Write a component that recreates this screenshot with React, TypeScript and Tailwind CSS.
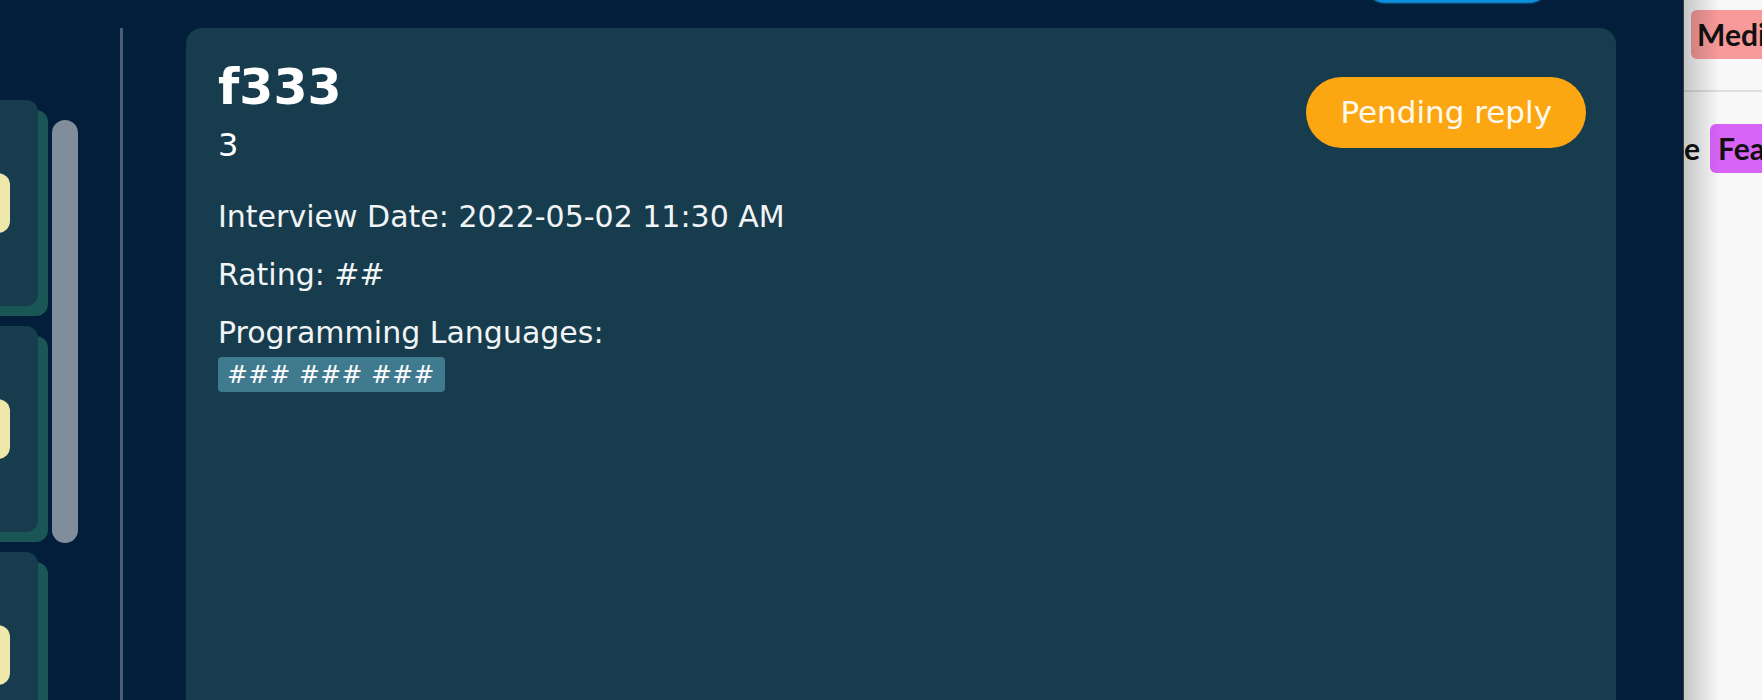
import React from "react";

function LeftCard() {
  return (
    <div className="w-[200px] h-[206px] shrink-0 rounded-[12px] bg-[#163c4e] shadow-[10px_10px_0_0_#1b5656] flex items-center justify-end pr-[28px]">
      <div className="w-[80px] h-[60px] rounded-[12px] bg-[#eee8aa]" />
    </div>
  );
}

export default function App() {
  return (
    <div className="flex w-[1762px] h-[700px] overflow-hidden bg-[#021e3b] font-['DejaVu_Sans',sans-serif]">
      <div className="flex flex-col w-[1683px] shrink-0">
        <div className="h-[28px] shrink-0 flex">
          <div className="ml-[1365px] w-[184px] h-[40px] -mt-[38px] rounded-full bg-[#0b8fdf] shadow-[0_1px_2px_#1aa3f0]" />
        </div>
        <div className="flex flex-1 min-h-0">
          <div className="w-[52px] shrink-0 overflow-hidden">
            <div className="-ml-[162px] pt-[72px] flex flex-col gap-[20px]">
              <LeftCard />
              <LeftCard />
              <LeftCard />
            </div>
          </div>
          <div className="w-[26px] h-[423px] mt-[92px] rounded-full bg-[#808e9c] shrink-0" />
          <div className="ml-[42px] w-[3px] bg-[#4b5c74] shrink-0" />
          <div className="ml-[63px] w-[1430px] shrink-0 rounded-t-[16px] bg-[#163c4e] pl-[32px] pr-[30px] pt-[32px] text-white">
            <div className="flex items-center justify-between">
              <div>
                <div className="text-[49px] font-bold leading-[56px]">f333</div>
                <div className="text-[32px] leading-[40px] mt-[9px]">3</div>
              </div>
              <div className="h-[71px] px-[34px] rounded-full bg-[#fca612] text-[31px] leading-[71px] text-[#fffaf0]">
                Pending reply
              </div>
            </div>
            <div className="mt-[34px] text-[30px] leading-[35px] text-[#f2f4f5]">
              <div>Interview Date: 2022-05-02 11:30 AM</div>
              <div className="mt-[23px]">Rating: ##</div>
              <div className="mt-[23px]">Programming Languages:</div>
              <div className="mt-[7px] flex">
                <span className="rounded-[4px] bg-[#3f7a8e] pl-[9px] pr-[10px] py-[3px] text-[25px] leading-[29px] tracking-[0.3px] text-white">
                  ### ### ###
                </span>
              </div>
            </div>
          </div>
        </div>
      </div>
      <div className="relative flex-1 border-l border-[#3a3a3a] bg-[#f8f8f8] overflow-hidden font-['Lato',sans-serif] text-[#111]">
        <div className="h-[92px] border-b-2 border-[#dedede] pt-[10px] pl-[7px] whitespace-nowrap">
          <span className="inline-block h-[49px] rounded-[6px] bg-[#f89a9a] pl-[6px] pr-[10px] text-[30px] leading-[49px] font-bold">
            Medium
          </span>
        </div>
        <div className="pt-[32px] whitespace-nowrap flex items-center">
          <span className="text-[30px] leading-[49px] font-bold">e</span>
          <span className="ml-[10px] inline-block h-[49px] rounded-[6px] bg-[#d863f7] pl-[8px] pr-[10px] text-[30px] leading-[49px] font-bold">
            Feature
          </span>
        </div>
        <div className="pointer-events-none absolute inset-y-0 left-0 w-[36px] bg-[linear-gradient(to_right,rgba(0,0,0,0.2),rgba(0,0,0,0))]" />
      </div>
    </div>
  );
}
